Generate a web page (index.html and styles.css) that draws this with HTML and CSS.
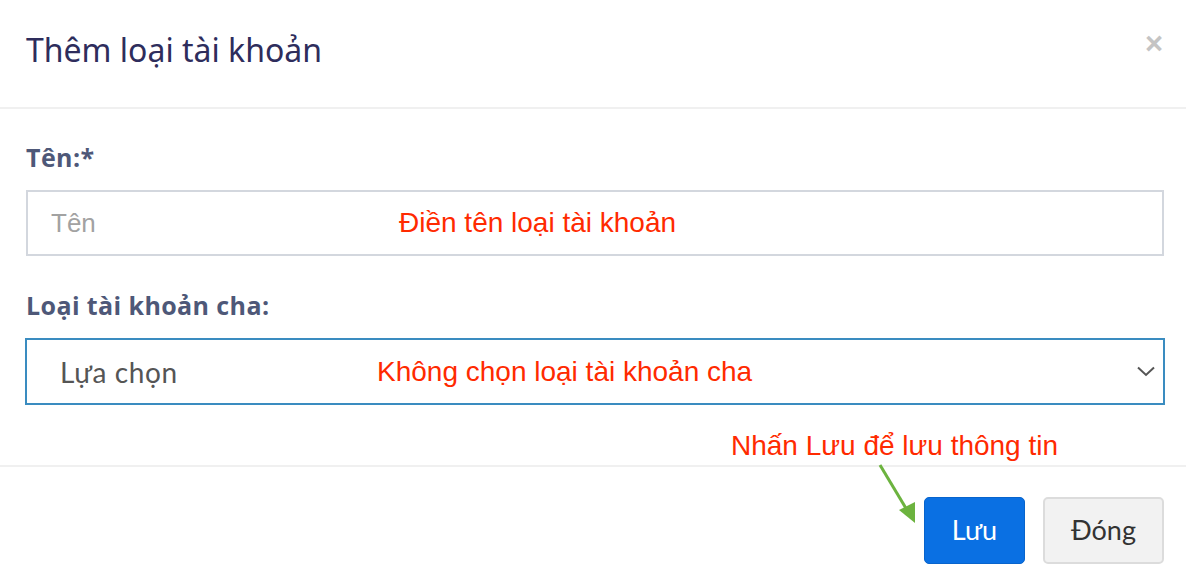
FILE: index.html
```html
<!DOCTYPE html>
<html lang="vi">
<head>
<meta charset="utf-8">
<title>Thêm loại tài khoản</title>
<link rel="stylesheet" href="styles.css">
</head>
<body>
<div class="modal">
  <div class="modal-header">
    <h4 class="modal-title">Thêm loại tài khoản</h4>
    <span class="close">×</span>
  </div>
  <div class="modal-body">
    <div class="form-group">
      <label class="control-label">Tên:*</label>
      <div class="field">
        <input class="form-control" type="text" placeholder="Tên">
        <span class="note note-input">Điền tên loại tài khoản</span>
      </div>
    </div>
    <div class="form-group">
      <label class="control-label">Loại tài khoản cha:</label>
      <div class="field select">
        <span class="select-value">Lựa chọn</span>
        <svg class="chevron" width="18" height="11" viewBox="0 0 18 11"><polyline points="1,1.5 9,9 17,1.5" fill="none" stroke="#555" stroke-width="2"/></svg>
        <span class="note note-select">Không chọn loại tài khoản cha</span>
      </div>
    </div>
  </div>
  <div class="modal-footer">
    <span class="note note-footer">Nhấn Lưu để lưu thông tin</span>
    <svg class="arrow" width="50" height="64" viewBox="0 0 50 64"><line x1="4" y1="2" x2="31" y2="47" stroke="#6cb33f" stroke-width="3"/><polygon points="23,47 39,39 39,60" fill="#6cb33f"/></svg>
    <button class="btn btn-primary">Lưu</button>
    <button class="btn btn-default">Đóng</button>
  </div>
</div>
</body>
</html>
```
FILE: styles.css
```css
html, body {
  margin: 0;
  padding: 0;
  background: #fff;
}
.modal {
  width: 1186px;
  height: 588px;
  overflow: hidden;
  font-family: "Lato", "Liberation Sans", sans-serif;
}
.modal-header {
  height: 107px;
  border-bottom: 2px solid #f0f0f0;
  display: flex;
  justify-content: space-between;
  align-items: flex-start;
  padding: 0 23px 0 26px;
}
.modal-title {
  margin: 0;
  padding-top: 28px;
  font-family: "Noto Sans", sans-serif;
  font-weight: 400;
  font-size: 32px;
  line-height: 44px;
  color: #2e2d5c;
}
.close {
  padding-top: 27px;
  font-family: "Liberation Sans", sans-serif;
  font-weight: 700;
  font-size: 31px;
  line-height: 34px;
  color: #c4c4c4;
}
.modal-body {
  padding: 32px 22px 60px 26px;
}
.form-group + .form-group {
  margin-top: 33px;
}
.control-label {
  display: block;
  font-family: "Open Sans", sans-serif;
  font-weight: 700;
  font-size: 25px;
  letter-spacing: 0.4px;
  line-height: 33px;
  color: #4e5878;
  margin-bottom: 16px;
}
.field {
  position: relative;
}
.form-control {
  display: block;
  box-sizing: border-box;
  width: 100%;
  height: 66px;
  margin: 0;
  border: 2px solid #d3d7de;
  border-radius: 0;
  padding: 0 0 0 23px;
  font-family: "Liberation Sans", sans-serif;
  font-size: 26px;
  color: #555;
  outline: none;
}
.form-control::placeholder {
  color: #a2a2a2;
}
.select {
  box-sizing: border-box;
  height: 67px;
  margin: 0 -1px;
  border: 2px solid #3a8cc0;
  display: flex;
  align-items: center;
  justify-content: space-between;
  padding: 0 8px 0 33px;
}
.select-value {
  font-family: "Lato", sans-serif;
  font-size: 28px;
  letter-spacing: 0.6px;
  color: #555;
}
.note {
  position: absolute;
  font-family: "Liberation Sans", sans-serif;
  font-size: 28px;
  line-height: 32px;
  color: #ff2a00;
  white-space: nowrap;
}
.note-input {
  left: 373px;
  top: 17px;
}
.note-select {
  left: 350px;
  top: 16px;
}
.modal-footer {
  position: relative;
  border-top: 2px solid #f0f0f0;
  display: flex;
  justify-content: flex-end;
  gap: 18px;
  padding: 30px 22px 0 0;
}
.note-footer {
  left: 731px;
  top: -37px;
}
.arrow {
  position: absolute;
  left: 876px;
  top: -4px;
}
.btn {
  box-sizing: border-box;
  height: 67px;
  margin: 0;
  border-radius: 5px;
  font-family: "Lato", sans-serif;
  font-size: 27px;
  padding: 0 0 3px;
  cursor: pointer;
}
.btn-primary {
  width: 101px;
  background: #0a70e3;
  border: 1px solid #0864cc;
  color: #fff;
}
.btn-default {
  width: 121px;
  background: #f2f2f2;
  border: 2px solid #dcdcdc;
  color: #333;
}
```
